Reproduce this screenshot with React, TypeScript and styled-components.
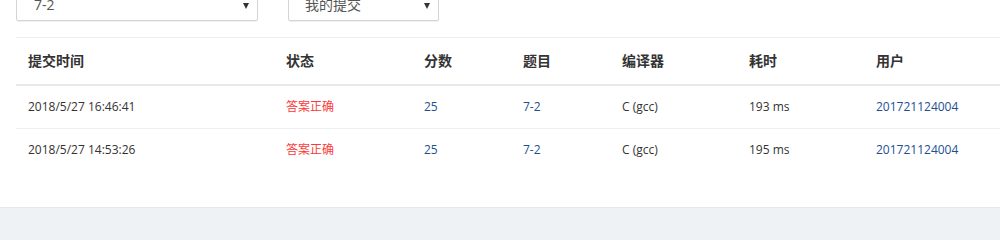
import React from "react";
import styled, { createGlobalStyle } from "styled-components";

const Global = createGlobalStyle`
  html, body { margin: 0; padding: 0; background: #eef2f5; }
  body { font-family: "Open Sans", "Noto Sans CJK SC", sans-serif; color: #333; }
`;

const Panel = styled.div`
  background: #fff;
  height: 207px;
  border-bottom: 1px solid #e4e8ec;
  overflow: hidden;
  padding-left: 16px;
`;

const Toolbar = styled.div`
  height: 38px;
  display: flex;
  align-items: flex-end;
  gap: 30px;
  padding-bottom: 16px;
  box-sizing: border-box;
  overflow: hidden;
  border-bottom: 1px solid #eeeeee;
`;

const Select = styled.div<{ $w: number; $pad: number }>`
  position: relative;
  flex: none;
  width: ${(p) => p.$w}px;
  height: 34px;
  box-sizing: border-box;
  border: 1px solid #d4d4d4;
  border-radius: 2px;
  box-shadow: 0 1px 1px rgba(0, 0, 0, 0.06);
  display: flex;
  align-items: center;
  padding-left: ${(p) => p.$pad}px;
  font-size: 14px;
  color: #555;
`;

const Arrow = styled.span`
  position: absolute;
  right: 8px;
  top: 15px;
  width: 0;
  height: 0;
  border-left: 3px solid transparent;
  border-right: 3px solid transparent;
  border-top: 6px solid #333;
`;

const Row = styled.div<{ $head?: boolean }>`
  display: grid;
  grid-template-columns: 258px 138px 99px 99px 127px 127px 1fr;
  height: ${(p) => (p.$head ? 46 : 42)}px;
  align-items: center;
  border-bottom: ${(p) => (p.$head ? "2px solid #e9e9e9" : "1px solid #eeeeee")};
  font-size: ${(p) => (p.$head ? 14 : 12)}px;
  font-weight: ${(p) => (p.$head ? 700 : 400)};
  color: #333;
  &:last-child { border-bottom: none; }
`;

const Cell = styled.div<{ $tone?: "red" | "link" }>`
  padding-left: 12px;
  white-space: nowrap;
  line-height: 1;
  color: ${(p) => (p.$tone === "red" ? "#fa3a3a" : p.$tone === "link" ? "#1d4f91" : "inherit")};
`;

const heads = ["提交时间", "状态", "分数", "题目", "编译器", "耗时", "用户"];

const rows = [
  { time: "2018/5/27 16:46:41", ms: "193 ms" },
  { time: "2018/5/27 14:53:26", ms: "195 ms" },
];

export default function App() {
  return (
    <>
      <Global />
      <Panel>
        <Toolbar>
          <Select $w={242} $pad={17}>
            7-2
            <Arrow />
          </Select>
          <Select $w={151} $pad={16}>
            我的提交
            <Arrow />
          </Select>
        </Toolbar>
        <div>
          <Row $head>
            {heads.map((h) => (
              <Cell key={h}>{h}</Cell>
            ))}
          </Row>
          {rows.map((r) => (
            <Row key={r.time}>
              <Cell>{r.time}</Cell>
              <Cell $tone="red">答案正确</Cell>
              <Cell $tone="link">25</Cell>
              <Cell $tone="link">7-2</Cell>
              <Cell>C (gcc)</Cell>
              <Cell>{r.ms}</Cell>
              <Cell $tone="link">201721124004</Cell>
            </Row>
          ))}
        </div>
      </Panel>
    </>
  );
}
